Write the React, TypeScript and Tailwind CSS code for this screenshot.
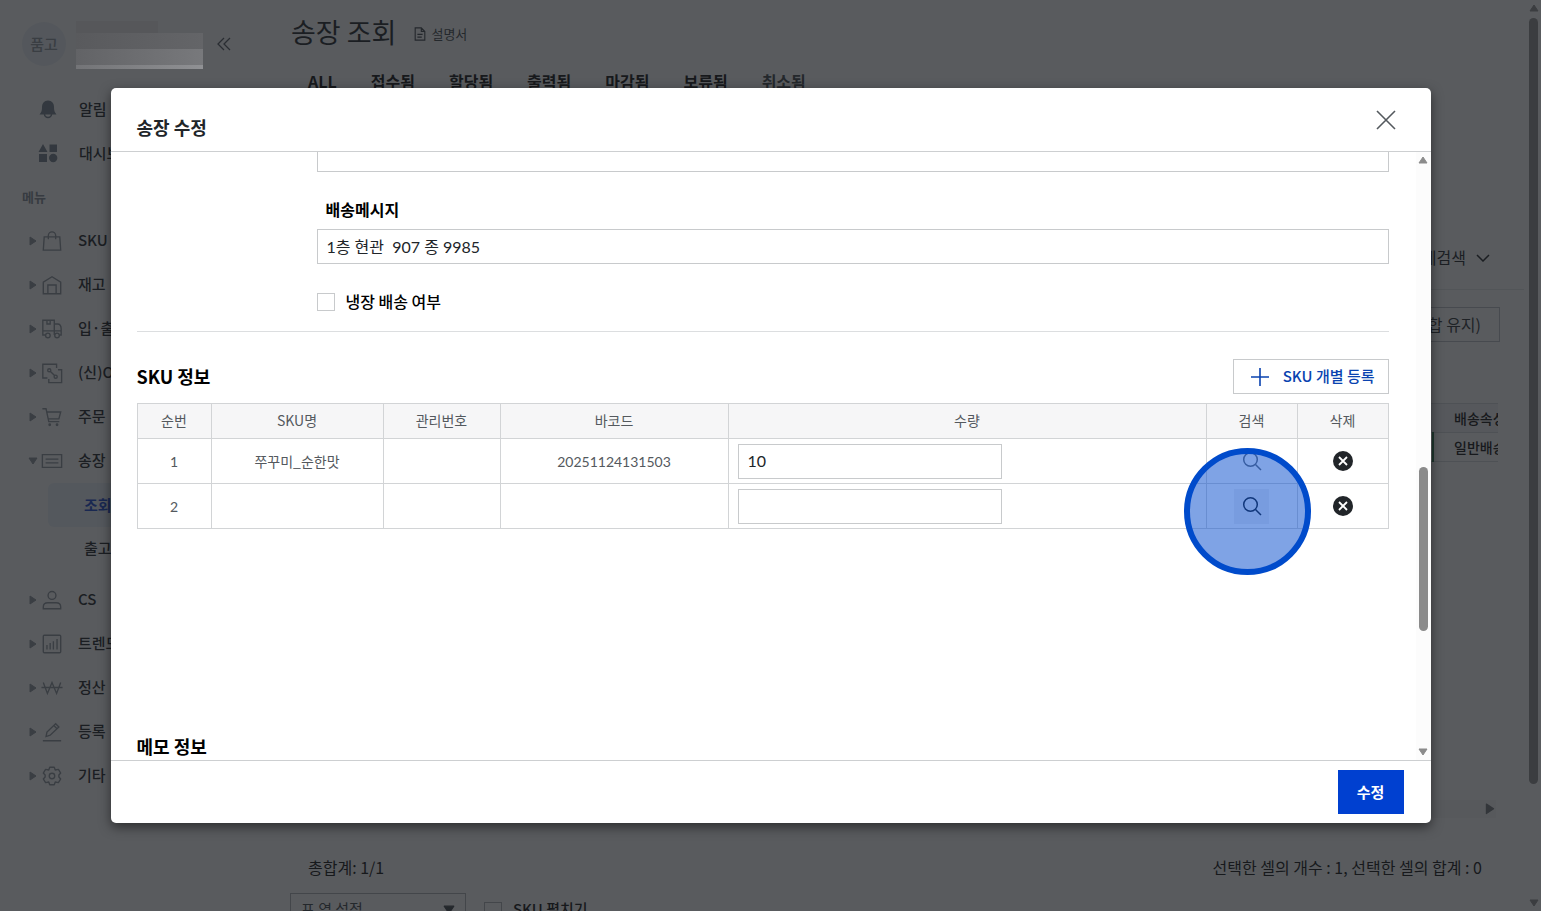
import { useState } from "react";
import type { ReactNode } from "react";

type MenuItem = { label: string; icon: ReactNode; open?: boolean };

const tabs = ["ALL", "접수됨", "할당됨", "출력됨", "마감됨", "보류됨"];

const menuTop: MenuItem[] = [
  { label: "SKU", icon: <><path d="M3.500 7.500h17L21.500 22h-19z" /><path d="M8 10V6a4 4 0 0 1 8 0v4" /></> },
  { label: "재고", icon: <><path d="M2.500 21.500V9L12 3l9.500 6v12.500z" /><path d="M7.500 21.500V12h9v9.500" /></> },
  { label: "입·출고", icon: <><path d="M4.500 18.500H2v-16h12.500v16M6.500 2.500v4h3.500v-4M14.500 6.500H18c2.500 0 4 2.500 4 5.500v6.500h-1.500M2 14h20" /><circle cx="7.500" cy="19" r="2.500" fill="white" /><circle cx="17.500" cy="19" r="2.500" fill="white" /></> },
  { label: "(신)OMS", icon: <><path d="M7 17.500H2v-15h15v4M18.500 8.500H22.500v14h-14v-4" /><circle cx="9" cy="9" r="1.700" /><circle cx="16" cy="16" r="1.700" /><path d="M10.300 10.300l4.500 4.500" /></> },
  { label: "주문", icon: <><path d="M1.500 3h4l3 14h11.500M6 6.500h15.500l-2 7.500H8" /><circle cx="9.500" cy="20.500" r="0.800" /><circle cx="17.500" cy="20.500" r="0.800" /></> },
  { label: "송장", open: true, icon: <><path d="M1.500 5h21v14h-21z" /><path d="M5 10h14M5 14h14" /></> },
];

const menuBottom: MenuItem[] = [
  { label: "CS", icon: <><circle cx="12" cy="7" r="4.300" /><path d="M2.500 21.500v-2c0-3 2.500-4.500 5-4.500h9c2.500 0 5 1.500 5 4.500v2z" /></> },
  { label: "트렌드", icon: <><rect x="2.500" y="2.500" width="19" height="19" rx="1" /><path d="M6.500 18v-5M10 18v-7M13.500 18v-9M17.500 18V6.500" /></> },
  { label: "정산", icon: <path d="M2.500 6l4.500 12 5-12 5 12 4.500-12M0.500 11.500h23" /> },
  { label: "등록", icon: <><path d="M5.500 17l1-5L16 3l3.500 3.500-9.500 9zM2 21.500h20M14 5l3.500 3.500" /></> },
  { label: "기타", icon: <><path d="M9.500 2.500h5l1 3 3.500-.7 2.500 4-2 2.200v2l2 2.200-2.500 4-3.500-.7-1 3h-5l-1-3-3.500.7-2.500-4 2-2.200v-2l-2-2.200 2.500-4 3.500.7z" strokeLinejoin="round" /><circle cx="12" cy="12" r="3" /></> },
];

const cell = "border border-[#d2d4d6] text-center";

function Arrow({ className }: { className: string }) {
  return (
    <svg viewBox="0 0 10 8" className={className} aria-hidden="true">
      <path d="M5 1 9 7H1z" fill="currentColor" stroke="currentColor" strokeWidth="1" strokeLinejoin="round" />
    </svg>
  );
}

function SearchIcon() {
  return (
    <svg viewBox="0 0 20 20" className="size-5" fill="none" stroke="currentColor" strokeWidth="1.5" aria-hidden="true">
      <circle cx="8.500" cy="8.500" r="6.800" />
      <path d="M13.500 13.500 19 19" />
    </svg>
  );
}

function MenuRow({ item }: { item: MenuItem }) {
  return (
    <button className="flex h-11 w-full items-center pl-7 text-[15px] font-medium text-[#101418]">
      <Arrow className={item.open ? "w-[10px] rotate-180 text-[#868e96]" : "w-[10px] rotate-90 text-[#868e96]"} />
      <svg
        viewBox="0 0 24 24"
        className="ml-[3px] size-[22px] text-[#868e96]"
        fill="none"
        stroke="currentColor"
        strokeWidth="1.5"
        aria-hidden="true"
      >
        {item.icon}
      </svg>
      <span className="ml-[15px] pb-px whitespace-nowrap">{item.label}</span>
    </button>
  );
}

function Sidebar() {
  return (
    <aside className="w-[261px] shrink-0 pt-[21px]">
      <div className="flex h-[48px] items-start pl-[22px]">
        <div className="mt-px flex size-[44px] items-center justify-center rounded-full bg-[#eaf0f6] text-[15px] font-medium text-[#868e96]">품고</div>
        {/* 가려진 계정 정보 */}
        <div className="relative z-10 ml-[10px] w-[127px]">
          <div className="h-3 w-[82px] bg-[#56575a]" />
          <div className="h-4 bg-linear-to-r from-[#595a5d] to-[#646568]" />
          <div className="h-4 bg-linear-to-r from-[#626366] to-[#78797c]" />
          <div className="h-1 bg-linear-to-r from-[#737477] to-[#909194]" />
        </div>
        <button aria-label="메뉴 접기" className="mt-4 ml-[14px] text-[#495057]">
          <svg viewBox="0 0 14 14" className="size-[14px]" fill="none" stroke="currentColor" strokeWidth="1.3">
            <path d="M7 1 1 7l6 6M13 1 7 7l6 6" />
          </svg>
        </button>
      </div>

      <nav className="mt-[18px]">
        <button className="flex h-11 w-full items-center pl-[38px] text-[15px] font-medium text-[#101418]">
          <svg viewBox="0 0 20 20" className="size-5 text-[#6d7a86]" fill="currentColor">
            <path d="M10 1.500c-4 0-6 3-6 6.500 0 3.500-.5 5-2.500 7.500h17C16.500 13 16 11.500 16 8c0-3.500-2-6.500-6-6.500z" />
            <path d="M6.500 15a3.500 3.500 0 0 0 7 0" fill="none" stroke="currentColor" strokeWidth="1.5" />
          </svg>
          <span className="ml-[21px]">알림</span>
        </button>
        <button className="flex h-11 w-full items-center pl-[38px] text-[15px] font-medium text-[#101418]">
          <svg viewBox="0 0 20 20" className="size-5 text-[#6d7a86]" fill="currentColor">
            <path d="M5 1l4.500 8h-9zM11.500 1.500h7.500v7.500h-7.500zM1 11h8v8H1z" />
            <circle cx="15.200" cy="15" r="4.200" />
          </svg>
          <span className="ml-[21px]">대시보드</span>
        </button>
        <p className="mt-3 mb-3 pl-[22px] text-[13px] leading-5 font-bold text-[#7b858e]">메뉴</p>
        {menuTop.map(m => <MenuRow key={m.label} item={m} />)}
        <a href="#list" className="ml-[48px] flex h-[44px] items-center rounded-md bg-[#ebf1fa] pl-9 text-[15px] font-bold text-[#0a3ccc]">조회</a>
        <a href="#out" className="ml-[48px] flex h-[44px] items-center pb-0.5 pl-9 text-[15px] font-medium text-[#101418]">출고</a>
        <div className="mt-[7px]">
          {menuBottom.map(m => <MenuRow key={m.label} item={m} />)}
        </div>
      </nav>
    </aside>
  );
}

function InvoicePage() {
  return (
    <main className="flex min-w-0 flex-1 flex-col pt-[11px] pr-0.5">
      <header className="flex h-10 items-center pl-[30px]">
        <h1 className="pt-px text-[27px] leading-10 text-[#101418]">송장 조회</h1>
        <a href="#manual" className="ml-[17px] flex items-center gap-1 pt-[6px] text-[13px] text-[#343a40]">
          <svg viewBox="0 0 14 16" className="h-[14px] w-[14px]" fill="none" stroke="currentColor" strokeWidth="1.3">
            <path d="M1.500 1h7l4 4v10h-11zM8.500 1v4h4M4 8.500h6M4 11.500h5" />
          </svg>
          설명서
        </a>
      </header>
      <div className="mt-[18px] flex gap-[34px] pl-[47px] text-[16px] leading-6 font-bold text-black">
        {tabs.map(t => <button key={t}>{t}</button>)}
        <button className="text-[#343a40]">취소됨</button>
      </div>

      <div className="mt-[133px] flex h-[64px] items-center justify-end border-b border-[#e3e6e8] pr-[34px] text-[16px] text-[#101418]">
        <span className="pb-0.5">상세검색</span>
        <svg viewBox="0 0 14 8" className="ml-[10px] w-[14px]" fill="none" stroke="currentColor" strokeWidth="1.500">
          <path d="m1 1 6 6 6-6" />
        </svg>
      </div>
      <div className="mt-[17px] mr-[24px] flex justify-end">
        <button className="h-[35px] border border-[#b9bec3] px-[18px] pb-0.5 text-[16px] text-[#212529]">엑셀 다운로드(병합 유지)</button>
      </div>
      <div className="mt-[61px] mr-[26px] flex justify-end">
        <table className="w-[180px] table-fixed border-y border-[#d5d8db] text-[14px] text-black">
          <tbody>
            <tr className="h-[29px] border-b border-[#d5d8db] bg-[#f3f4f5]">
              <td className="w-[115px]" />
              <td className="overflow-hidden pl-[21px] font-medium whitespace-nowrap">배송속성</td>
            </tr>
            <tr className="h-[29px]">
              <td className="border-r-2 border-[#217346]" />
              <td className="overflow-hidden pl-[20px] font-medium whitespace-nowrap">일반배송</td>
            </tr>
          </tbody>
        </table>
      </div>

      <div className="mt-auto mr-[28px] flex h-[18px] items-center justify-end bg-[#f5f5f5] text-[#6b7075]">
        <Arrow className="w-[12px] rotate-90" />
      </div>
      <div className="mt-[37px] flex justify-between pr-[42px] pl-[47px] text-[16px] leading-6 text-black">
        <span>총합계: 1/1</span>
        <span>선택한 셀의 개수 : 1, 선택한 셀의 합계 : 0</span>
      </div>
      <div className="mt-[14px] flex h-[18px] shrink-0 items-start overflow-hidden pl-[29px] text-[15px] text-[#343a40]">
        <button className="flex h-[35px] w-[176px] items-center justify-between border border-[#a9aeb3] px-[10px] pb-0.5">
          표 열 설정
          <Arrow className="w-[12px] rotate-180" />
        </button>
        <label className="ml-[18px] flex h-[35px] items-center gap-[11px] font-medium text-black">
          <input type="checkbox" className="size-[18px] appearance-none border border-[#a9aeb3]" />
          <span className="pb-0.5">SKU 펼치기</span>
        </label>
      </div>
    </main>
  );
}

function SkuTable() {
  const [qty, setQty] = useState(["10", ""]);
  const rows = [
    { name: "쭈꾸미_순한맛", barcode: "20251124131503" },
    { name: "", barcode: "" },
  ];

  return (
    <table className="w-full table-fixed border-collapse text-[14px] text-[#54595e]">
      <colgroup>
        <col className="w-[74px]" />
        <col className="w-[172px]" />
        <col className="w-[117px]" />
        <col className="w-[228px]" />
        <col />
        <col className="w-[91px]" />
        <col className="w-[91px]" />
      </colgroup>
      <thead>
        <tr className="h-[35px] bg-[#f6f6f7]">
          {["순번", "SKU명", "관리번호", "바코드", "수량", "검색", "삭제"].map(h => (
            <th key={h} scope="col" className={`${cell} pb-0.5 font-normal`}>{h}</th>
          ))}
        </tr>
      </thead>
      <tbody>
        {rows.map((row, i) => (
          <tr key={i} className="h-[45px]">
            <td className={`${cell} font-[Lato,'Noto_Sans_CJK_KR',sans-serif]`}>{i + 1}</td>
            <td className={cell}>{row.name}</td>
            <td className={cell} />
            <td className={`${cell} font-[Lato,'Noto_Sans_CJK_KR',sans-serif]`}>{row.barcode}</td>
            <td className={`${cell} px-[9px]`}>
              <input
                aria-label={`수량 ${i + 1}`}
                value={qty[i]}
                onChange={e => setQty(qty.map((q, n) => (n === i ? e.target.value : q)))}
                className="block h-[35px] w-[264px] border border-[#c8cacc] px-[9px] pb-0.5 font-[Lato,'Noto_Sans_CJK_KR',sans-serif] text-[16px] text-[#212529] outline-none"
              />
            </td>
            <td className={`${cell} relative`}>
              <button
                aria-label="검색"
                className={i === 1 ? "mx-auto flex size-[35px] items-center justify-center bg-[#f0f1f3] text-[#212529]" : "mx-auto flex size-[35px] items-center justify-center text-[#6d7278]"}
              >
                <SearchIcon />
              </button>
              {/* 클릭 위치 표시 */}
              {i === 1 && (
                <span className="pointer-events-none absolute -top-9 -left-[23px] z-10 size-[127px] rounded-full border-[6px] border-[#004bcb] bg-[#0048cd]/50" />
              )}
            </td>
            <td className={cell}>
              <button aria-label="삭제" className="mx-auto flex size-5 items-center justify-center rounded-full bg-[#212529] text-white">
                <svg viewBox="0 0 10 10" className="size-[10px]" fill="none" stroke="currentColor" strokeWidth="1.800">
                  <path d="m1 1 8 8M9 1 1 9" />
                </svg>
              </button>
            </td>
          </tr>
        ))}
      </tbody>
    </table>
  );
}

function EditModal() {
  const [message, setMessage] = useState("1층 현관  907 종 9985");
  const [cold, setCold] = useState(false);

  return (
    <div
      role="dialog"
      aria-label="송장 수정"
      className="flex h-full w-full max-w-[1320px] flex-col overflow-hidden rounded-[5px] bg-white shadow-[0_4px_12px_rgba(0,0,0,0.5)]"
    >
      <div className="flex h-[64px] shrink-0 items-center justify-between border-b border-[#cdcfd1] pr-[35px] pl-[26px]">
        <h2 className="pt-[14px] text-[18px] leading-6 font-bold text-[#212529]">송장 수정</h2>
        <button aria-label="닫기" className="text-[#54595e]">
          <svg viewBox="0 0 20 20" className="size-5" fill="none" stroke="currentColor" strokeWidth="1.600">
            <path d="m1 1 18 18M19 1 1 19" />
          </svg>
        </button>
      </div>

      <div className="flex min-h-0 flex-1">
        <div className="min-w-0 flex-1 overflow-hidden pr-[27px] pl-[26px]">
          <div className="-mt-[15px] border-b border-[#dcdee0] pb-4 pl-[180px]">
            <input aria-label="상세 주소" className="block h-[35px] w-full border border-[#c8cacc] px-[9px] outline-none" />
            <label htmlFor="message" className="mt-[25px] block pl-[9px] text-[16px] leading-6 font-bold text-black">
              배송메시지
            </label>
            <input
              id="message"
              value={message}
              onChange={e => setMessage(e.target.value)}
              className="mt-2 block h-[35px] w-full border border-[#c8cacc] px-[9px] pb-0.5 font-[Lato,'Noto_Sans_CJK_KR',sans-serif] text-[16px] text-[#212529] outline-none"
            />
            <label className="mt-[25px] flex items-center gap-[11px] text-[16px] leading-6 font-medium text-black">
              <input
                type="checkbox"
                checked={cold}
                onChange={e => setCold(e.target.checked)}
                className="size-[18px] appearance-none border border-[#c8cacc] checked:bg-[#0040d0]"
              />
              <span className="pb-0.5">냉장 배송 여부</span>
            </label>
          </div>

          <div className="mt-[27px] mb-[9px] flex h-[35px] items-center justify-between">
            <h3 className="pb-px text-[18px] font-bold text-black">SKU 정보</h3>
            <button className="flex h-[35px] items-center border border-[#c8cacc] pr-[13px] pl-[17px] text-[15px] font-medium text-[#0a43b0]">
              <svg viewBox="0 0 18 18" className="mr-[14px] size-[18px]" fill="none" stroke="currentColor" strokeWidth="1.600">
                <path d="M9 0v18M0 9h18" />
              </svg>
              SKU 개별 등록
            </button>
          </div>
          <div className="min-h-[331px]">
            <SkuTable />
          </div>
          <h3 className="text-[18px] leading-6 font-bold text-black">메모 정보</h3>
        </div>

        {/* 스크롤바 */}
        <div className="flex w-[15px] shrink-0 flex-col items-center bg-[#fcfcfc] py-1 text-[#8b8b8b]">
          <Arrow className="w-[10px]" />
          <div className="mt-[303px] h-[164px] w-[9px] rounded-full bg-[#8b8b8b]" />
          <Arrow className="mt-auto w-[10px] rotate-180" />
        </div>
      </div>

      <div className="flex h-[63px] shrink-0 items-center justify-end border-t border-[#cdcfd1] pr-[27px]">
        <button className="h-[44px] w-[66px] bg-[#0040d0] text-[15px] font-bold text-white">수정</button>
      </div>
    </div>
  );
}

export default function App() {
  return (
    <div className="relative h-screen overflow-hidden bg-white font-['Noto_Sans_CJK_KR',sans-serif]">
      <div className="flex h-full">
        <Sidebar />
        <InvoicePage />
        <div className="flex w-[15px] shrink-0 flex-col items-center py-1 text-[#8b8b8b]">
          <Arrow className="w-[10px]" />
          <div className="mt-[6px] h-[766px] w-[9px] rounded-full bg-[#8b8b8b]" />
          <Arrow className="mt-auto w-[10px] rotate-180" />
        </div>
      </div>
      <div className="absolute inset-0 flex justify-center bg-[rgba(31,34,38,0.74)] px-8 py-[88px]">
        <EditModal />
      </div>
    </div>
  );
}
